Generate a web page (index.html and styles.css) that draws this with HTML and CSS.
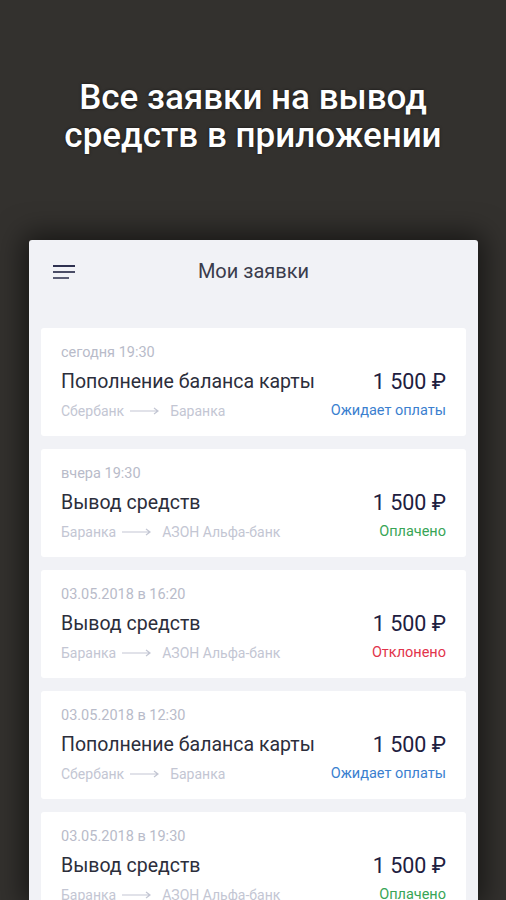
FILE: index.html
```html
<!DOCTYPE html>
<html>

<head>
	<meta charset="utf-8">
	<title>Мои заявки</title>
	<link rel="stylesheet" href="styles.css">
</head>

<body>

	<h1 class="promo">Все заявки на вывод<br>средств в приложении</h1>

	<div class="phone">
		<div class="topbar">
			<svg class="menu" width="22" height="14" viewBox="0 0 22 14">
				<rect x="0" y="0" width="22" height="2" fill="#2e3150"/>
				<rect x="0" y="6" width="22" height="2" fill="#4a4d66"/>
				<rect x="0" y="12" width="16" height="2" fill="#5a5d74"/>
			</svg>
			<span class="topbar-title">Мои заявки</span>
		</div>

		<div class="list">
			<div class="item">
				<div class="date">сегодня 19:30</div>
				<div class="row">
					<span class="name">Пополнение баланса карты</span>
					<span class="sum">1 500 ₽</span>
				</div>
				<div class="row">
					<span class="route">Сбербанк <svg class="arrow" width="30" height="8" viewBox="0 0 30 8"><path d="M0 4H28M24 1L28 4L24 7" fill="none" stroke="#c3c6d3" stroke-width="1.2"/></svg> Баранка</span>
					<span class="status wait">Ожидает оплаты</span>
				</div>
			</div>

			<div class="item">
				<div class="date">вчера 19:30</div>
				<div class="row">
					<span class="name">Вывод средств</span>
					<span class="sum">1 500 ₽</span>
				</div>
				<div class="row">
					<span class="route">Баранка <svg class="arrow" width="30" height="8" viewBox="0 0 30 8"><path d="M0 4H28M24 1L28 4L24 7" fill="none" stroke="#c3c6d3" stroke-width="1.2"/></svg> АЗОН Альфа-банк</span>
					<span class="status paid">Оплачено</span>
				</div>
			</div>

			<div class="item">
				<div class="date">03.05.2018 в 16:20</div>
				<div class="row">
					<span class="name">Вывод средств</span>
					<span class="sum">1 500 ₽</span>
				</div>
				<div class="row">
					<span class="route">Баранка <svg class="arrow" width="30" height="8" viewBox="0 0 30 8"><path d="M0 4H28M24 1L28 4L24 7" fill="none" stroke="#c3c6d3" stroke-width="1.2"/></svg> АЗОН Альфа-банк</span>
					<span class="status declined">Отклонено</span>
				</div>
			</div>

			<div class="item">
				<div class="date">03.05.2018 в 12:30</div>
				<div class="row">
					<span class="name">Пополнение баланса карты</span>
					<span class="sum">1 500 ₽</span>
				</div>
				<div class="row">
					<span class="route">Сбербанк <svg class="arrow" width="30" height="8" viewBox="0 0 30 8"><path d="M0 4H28M24 1L28 4L24 7" fill="none" stroke="#c3c6d3" stroke-width="1.2"/></svg> Баранка</span>
					<span class="status wait">Ожидает оплаты</span>
				</div>
			</div>

			<div class="item">
				<div class="date">03.05.2018 в 19:30</div>
				<div class="row">
					<span class="name">Вывод средств</span>
					<span class="sum">1 500 ₽</span>
				</div>
				<div class="row">
					<span class="route">Баранка <svg class="arrow" width="30" height="8" viewBox="0 0 30 8"><path d="M0 4H28M24 1L28 4L24 7" fill="none" stroke="#c3c6d3" stroke-width="1.2"/></svg> АЗОН Альфа-банк</span>
					<span class="status paid">Оплачено</span>
				</div>
			</div>
		</div>
	</div>

</body>

</html>
```

FILE: styles.css
```css
html,
body {
	margin: 0;
	height: 900px;
	overflow: hidden;
}

body {
	background-color: #33312e;
	font-family: Roboto, "Noto Sans", sans-serif;
}

.promo {
	margin: 0;
	padding: 79px 0 0 0;
	height: 161px;
	color: #ffffff;
	font-size: 35px;
	font-weight: 500;
	line-height: 38px;
	text-align: center;
	text-shadow: 0 0 3px rgba(0, 0, 0, 0.6);
}

.phone {
	margin-left: 29px;
	width: 449px;
	height: 660px;
	background-color: #f1f2f6;
	border-radius: 3px 3px 0 0;
	box-shadow: 0 0 28px 6px rgba(0, 0, 0, 0.55);
}

.topbar {
	position: relative;
	height: 62px;
	display: flex;
	align-items: center;
	justify-content: center;
}

.menu {
	position: absolute;
	left: 24px;
	top: 25px;
}

.topbar-title {
	font-size: 20px;
	color: #3a3c4c;
}

.list {
	padding: 26px 12px 0 12px;
	display: flex;
	flex-direction: column;
	gap: 13px;
}

.item {
	background-color: #ffffff;
	border-radius: 3px;
	height: 108px;
	box-sizing: border-box;
	padding: 17px 20px 0 20px;
}

.date {
	font-size: 14.5px;
	line-height: 16px;
	color: #b8bbc9;
}

.row {
	display: flex;
	justify-content: space-between;
	align-items: center;
}

.row + .row {
	margin-top: 8px;
}

.date + .row {
	margin-top: 8px;
}

.name {
	font-size: 19.5px;
	line-height: 26px;
	color: #2c2e3b;
}

.sum {
	font-size: 21.5px;
	line-height: 26px;
	color: #1d2040;
}

.route {
	font-size: 14px;
	line-height: 16px;
	color: #c3c6d3;
	display: flex;
	align-items: center;
}

.arrow {
	margin: 0 10px 0 6px;
}

.status {
	font-size: 14.5px;
	line-height: 16px;
}

.wait {
	color: #3b7fcf;
}

.paid {
	color: #38a556;
}

.declined {
	color: #e2344b;
}
```
